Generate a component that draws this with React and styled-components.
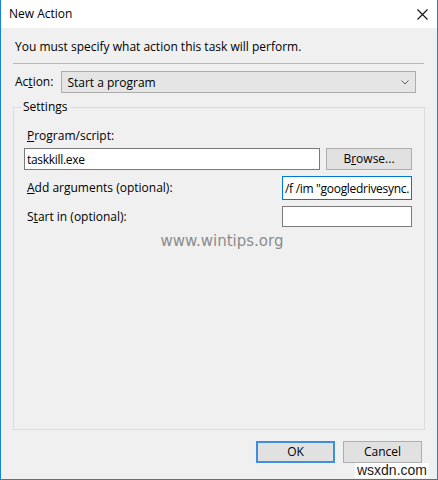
import React from "react";
import styled, { createGlobalStyle } from "styled-components";

const Global = createGlobalStyle`
  html, body { margin: 0; padding: 0; background: #ffffff; }
  * { box-sizing: border-box; }
  body { font-family: "Open Sans", "Noto Sans", sans-serif; font-size: 12px; color: #000; }
`;

const Window = styled.div`
  position: relative;
  width: 438px;
  height: 480px;
  display: flex;
  flex-direction: column;
  background: #f0f0f0;
  border: 1px solid #1883d7;
  border-top: none;
`;

const TitleBar = styled.div`
  height: 28px;
  flex: none;
  display: flex;
  align-items: center;
  justify-content: space-between;
  padding: 0 9px 0 8px;
  background: #ffffff;
`;

const Title = styled.span`
  font-size: 12px;
  line-height: 16px;
`;

const Body = styled.div`
  flex: 1;
  display: flex;
  flex-direction: column;
  padding: 11px 12px 0 12px;
`;

const Instruction = styled.div`
  height: 16px;
  line-height: 16px;
  padding-left: 2px;
`;

const Separator = styled.div`
  height: 1px;
  margin: 8px 1px 0 0;
  background: #b9b9b9;
`;

const ActionRow = styled.div`
  display: flex;
  align-items: center;
  margin: 7px 9px 0 2px;
  height: 22px;
`;

const Label = styled.label`
  line-height: 16px;
  white-space: nowrap;
  padding-left: ${(p) => p.$indent || 0}px;
  flex: ${(p) => (p.$grow ? 1 : "none")};
`;

const Key = styled.span`
  text-decoration: underline;
`;

const Combo = styled.div`
  flex: 1;
  height: 22px;
  display: flex;
  align-items: center;
  justify-content: space-between;
  padding: 0 6px 0 5px;
  margin-left: 8px;
  background: #e5e5e5;
  border: 1px solid #acacac;
`;

const GroupBox = styled.div`
  position: relative;
  height: 323px;
  margin-top: 14px;
  border: 1px solid #dcdcdc;
  padding: 20px 12px 0 10px;
  display: flex;
  flex-direction: column;
`;

const GroupTitle = styled.span`
  position: absolute;
  top: -9px;
  left: 7px;
  padding: 0 2px;
  line-height: 16px;
  background: #f0f0f0;
`;

const Row = styled.div`
  display: flex;
  align-items: center;
  gap: ${(p) => p.$gap || 0}px;
  margin-top: ${(p) => p.$top || 0}px;
  height: ${(p) => p.$h}px;
`;

const Field = styled.input`
  font-family: inherit;
  font-size: 12px;
  letter-spacing: -0.3px;
  color: #000;
  height: 100%;
  width: ${(p) => (p.$width ? `${p.$width}px` : "auto")};
  flex: ${(p) => (p.$width ? "none" : 1)};
  min-width: 0;
  margin: 0;
  padding: 0 2px;
  background: #ffffff;
  border: 1px solid ${(p) => (p.$focus ? "#0078d7" : "#7a7a7a")};
  outline: none;
`;

const Button = styled.div`
  width: ${(p) => p.$width}px;
  height: 22px;
  flex: none;
  display: flex;
  align-items: center;
  justify-content: center;
  background: #e1e1e1;
  border: ${(p) => (p.$default ? "2px solid #3e8ede" : "1px solid #adadad")};
  line-height: 16px;
`;

const Watermark = styled.div`
  margin-top: 5px;
  align-self: center;
  padding-left: 8px;
  font-family: "DejaVu Sans", Verdana, sans-serif;
  font-size: 15px;
  line-height: 18px;
  color: #8c8c8c;
`;

const Footer = styled.div`
  display: flex;
  justify-content: flex-end;
  gap: 8px;
  margin: 11px 3px 0 0;
`;

const Stamp = styled.div`
  position: absolute;
  right: 8px;
  bottom: 1px;
  padding: 0 2px;
  background: #ffffff;
  font-family: "Liberation Sans", Arial, sans-serif;
  font-size: 14px;
  line-height: 15px;
  color: #1a1a1a;
`;

const CloseIcon = () => (
  <svg width="11" height="11" viewBox="0 0 11 11">
    <path d="M0.5 0.5 L10.5 10.5 M10.5 0.5 L0.5 10.5" stroke="#111" strokeWidth="1.1" fill="none" />
  </svg>
);

const Chevron = () => (
  <svg width="8" height="5" viewBox="0 0 8 5">
    <path d="M0.5 0.5 L4 4 L7.5 0.5" stroke="#5f5f5f" strokeWidth="1" fill="none" />
  </svg>
);

export default function App() {
  return (
    <>
      <Global />
      <Window>
        <TitleBar>
          <Title>New Action</Title>
          <CloseIcon />
        </TitleBar>
        <Body>
          <Instruction>You must specify what action this task will perform.</Instruction>
          <Separator />
          <ActionRow>
            <Label>
              Ac<Key>t</Key>ion:
            </Label>
            <Combo>
              <span>Start a program</span>
              <Chevron />
            </Combo>
          </ActionRow>
          <GroupBox>
            <GroupTitle>Settings</GroupTitle>
            <Label $indent={3}>
              <Key>P</Key>rogram/script:
            </Label>
            <Row $top={4} $h={22} $gap={6}>
              <Field readOnly value="taskkill.exe" />
              <Button $width={86}>
                B<Key>r</Key>owse...
              </Button>
            </Row>
            <Row $top={6} $h={24}>
              <Label $indent={3} $grow>
                <Key>A</Key>dd arguments (optional):
              </Label>
              <Field $width={130} $focus readOnly value={'/f /im "googledrivesync.'} />
            </Row>
            <Row $top={6} $h={21}>
              <Label $indent={3} $grow>
                S<Key>t</Key>art in (optional):
              </Label>
              <Field $width={130} readOnly value="" />
            </Row>
            <Watermark>www.wintips.org</Watermark>
          </GroupBox>
          <Footer>
            <Button $width={79} $default>
              OK
            </Button>
            <Button $width={79}>Cancel</Button>
          </Footer>
        </Body>
        <Stamp>wsxdn.com</Stamp>
      </Window>
    </>
  );
}
